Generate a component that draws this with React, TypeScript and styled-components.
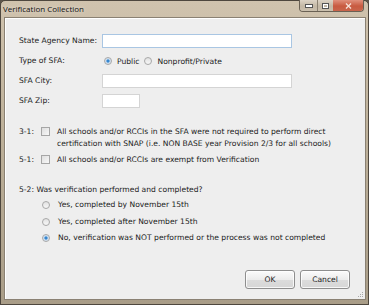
import React, { FC } from 'react';
import styled, { createGlobalStyle } from 'styled-components';

const GlobalStyle = createGlobalStyle`
    html, body {
        margin: 0;
        padding: 0;
        background: #5c544a;
    }
`;

const Window = styled.div`
    width: 369px;
    height: 305px;
    box-sizing: border-box;
    display: flex;
    flex-direction: column;
    background: linear-gradient(to bottom, #d0c3ae 0%, #bfb29b 40%, #a99d88 100%);
    border: 1px solid #4e473e;
    border-radius: 5px 5px 0 0;
    font-family: "DejaVu Sans", "Liberation Sans", sans-serif;
    color: #1c1c1c;
`;

const TitleBar = styled.div`
    height: 16px;
    flex-shrink: 0;
    display: flex;
    align-items: flex-start;
    justify-content: space-between;
    padding: 0 4px 0 2px;
`;

const Title = styled.div`
    font-family: "Open Sans", "Noto Sans", sans-serif;
    font-size: 8px;
    line-height: 14px;
    padding-top: 1px;
    color: #101010;
    text-shadow: 0 0 4px rgba(255, 255, 255, 0.7);
`;

const Caption = styled.div`
    display: flex;
    height: 11px;
    margin-top: -1px;
    border: 1px solid #6a6154;
    border-top: none;
    border-radius: 0 0 4px 4px;
    overflow: hidden;
`;

const CaptionButton = styled.div<{ $w: number; $close?: boolean }>`
    width: ${(p) => p.$w}px;
    display: flex;
    align-items: center;
    justify-content: center;
    background: ${(p) =>
        p.$close
            ? 'linear-gradient(to bottom, #e0907c 0%, #c85a40 55%, #c9654c 100%)'
            : 'linear-gradient(to bottom, #ddd4c6 0%, #c4b8a5 55%, #cbc0ae 100%)'};
    border-left: ${(p) => (p.$close ? 'none' : '1px solid #8b8171')};
    &:first-child {
        border-left: none;
    }
`;

const Client = styled.div`
    flex: 1;
    margin: 0 2px 4px 3px;
    background: #eeeeee;
    border: 1px solid #8a8173;
    box-shadow: inset 1px 1px 0 #ffffff;
    padding: 16px 14px 0 14px;
    display: flex;
    flex-direction: column;
    font-size: 7.6px;
    position: relative;
`;

const FieldGrid = styled.div`
    display: grid;
    grid-template-columns: 83px 1fr;
    row-gap: 6px;
    align-items: center;
`;

const Label = styled.div`
    line-height: 14px;
`;

const TextInput = styled.div<{ $w: number; $focus?: boolean }>`
    width: ${(p) => p.$w}px;
    height: 14px;
    box-sizing: border-box;
    background: #ffffff;
    border: 1px solid ${(p) => (p.$focus ? '#a9c6e3' : '#d4d4d4')};
`;

const RadioGroup = styled.div`
    display: flex;
    align-items: center;
    gap: 5px;
    padding-left: 2px;
`;

const Choice = styled.label`
    display: flex;
    align-items: center;
    gap: 5px;
    white-space: nowrap;
`;

const Radio = styled.span<{ $on?: boolean }>`
    width: 8px;
    height: 8px;
    box-sizing: border-box;
    border-radius: 50%;
    border: 1px solid #a8a8a8;
    background: ${(p) =>
        p.$on
            ? 'radial-gradient(circle, #2f7fc8 0%, #3b8bd3 30%, #c9dcee 45%, #e6edf4 100%)'
            : 'linear-gradient(to bottom, #e2e2e2, #f7f7f7)'};
    flex-shrink: 0;
`;

const Box = styled.span`
    width: 9px;
    height: 9px;
    box-sizing: border-box;
    border: 1px solid #a6a6a6;
    background: linear-gradient(135deg, #dedede, #f8f8f8);
    flex-shrink: 0;
`;

const CheckRow = styled.div<{ $top: number }>`
    display: grid;
    grid-template-columns: 22px 16px 1fr;
    margin-top: ${(p) => p.$top}px;
    line-height: 12px;
    align-items: start;
    & > ${Box} {
        margin-top: 1px;
    }
`;

const Question = styled.div`
    margin-top: 18px;
    line-height: 12px;
`;

const Options = styled.div`
    display: flex;
    flex-direction: column;
    gap: 4.6px;
    margin-top: 3px;
    padding-left: 23px;
    line-height: 12px;
    & ${Choice} {
        gap: 8px;
    }
`;

const Footer = styled.div`
    margin-top: auto;
    display: flex;
    justify-content: flex-end;
    gap: 5px;
    padding: 0 1px 10px 0;
`;

const Button = styled.button`
    width: 50px;
    height: 19px;
    padding: 0;
    font-family: inherit;
    font-size: 7.6px;
    color: #1c1c1c;
    border: 1px solid #8e8e8e;
    border-radius: 3px;
    background: linear-gradient(to bottom, #fbfbfb 0%, #ececec 50%, #dcdcdc 51%, #d6d6d6 100%);
    box-shadow: inset 0 0 0 1px rgba(255, 255, 255, 0.8);
`;

const Grip = styled.svg`
    position: absolute;
    right: 1px;
    bottom: 1px;
    width: 6px;
    height: 6px;
    fill: #a8a8a8;
`;

const App: FC = () => {
    return (
        <>
            <GlobalStyle />
            <Window>
                <TitleBar>
                    <Title>Verification Collection</Title>
                    <Caption>
                        <CaptionButton $w={17}>
                            <svg width="8" height="4"><rect x="0.5" y="0.5" width="7" height="3" fill="#fff" stroke="#555" strokeWidth="1" /></svg>
                        </CaptionButton>
                        <CaptionButton $w={15}>
                            <svg width="7" height="6"><rect x="0.5" y="0.5" width="6" height="5" fill="none" stroke="#555" strokeWidth="1" /><rect x="1.5" y="1.5" width="4" height="3" fill="none" stroke="#fff" strokeWidth="1" /></svg>
                        </CaptionButton>
                        <CaptionButton $w={30} $close>
                            <svg width="7" height="6"><path d="M1 0.5 L6 5.5 M6 0.5 L1 5.5" stroke="#f6e0d8" strokeWidth="1.4" /></svg>
                        </CaptionButton>
                    </Caption>
                </TitleBar>
                <Client>
                    <FieldGrid>
                        <Label>State Agency Name:</Label>
                        <TextInput $w={190} $focus />
                        <Label>Type of SFA:</Label>
                        <RadioGroup>
                            <Choice><Radio $on />Public</Choice>
                            <Choice><Radio />Nonprofit/Private</Choice>
                        </RadioGroup>
                        <Label>SFA City:</Label>
                        <TextInput $w={190} />
                        <Label>SFA Zip:</Label>
                        <TextInput $w={38} />
                    </FieldGrid>
                    <CheckRow $top={18}>
                        <span>3-1:</span>
                        <Box />
                        <span>
                            All schools and/or RCCIs in the SFA were not required to perform direct
                            <br />
                            certification with SNAP (i.e. NON BASE year Provision 2/3 for all schools)
                        </span>
                    </CheckRow>
                    <CheckRow $top={4}>
                        <span>5-1:</span>
                        <Box />
                        <span>All schools and/or RCCIs are exempt from Verification</span>
                    </CheckRow>
                    <Question>5-2: Was verification performed and completed?</Question>
                    <Options>
                        <Choice><Radio />Yes, completed by November 15th</Choice>
                        <Choice><Radio />Yes, completed after November 15th</Choice>
                        <Choice><Radio $on />No, verification was NOT performed or the process was not completed</Choice>
                    </Options>
                    <Footer>
                        <Button>OK</Button>
                        <Button>Cancel</Button>
                    </Footer>
                    <Grip viewBox="0 0 6 6">
                        <rect x="4" y="0" width="1" height="1" />
                        <rect x="2" y="2" width="1" height="1" />
                        <rect x="4" y="2" width="1" height="1" />
                        <rect x="0" y="4" width="1" height="1" />
                        <rect x="2" y="4" width="1" height="1" />
                        <rect x="4" y="4" width="1" height="1" />
                    </Grip>
                </Client>
            </Window>
        </>
    );
};

export default App;
